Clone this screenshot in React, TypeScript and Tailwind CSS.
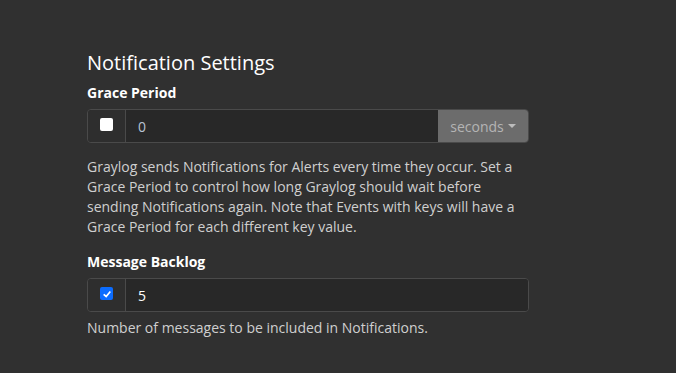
export default function App() {
    return (
        <div className="min-h-[373px] w-full bg-[#303030] font-['Open_Sans',sans-serif] text-[#e0e0e0]">
            <div className="w-[442px] ml-[87px] pt-[49px]">
                <h2 className="text-[20px] leading-[28px] text-white mb-[6px]">Notification Settings</h2>

                <label className="block text-[14px] font-bold leading-[20px] text-white mb-[6px]">Grace Period</label>
                <div className="flex h-[34px] rounded-[4px] border border-[#4a4a4a] overflow-hidden">
                    <span className="w-[38px] flex items-center justify-center border-r border-[#4a4a4a] bg-[#2e2e2e]">
                        <span className="w-[13px] h-[13px] rounded-[2px] bg-white -mt-[3px]"/>
                    </span>
                    <span className="flex-1 flex items-center bg-[#282828] px-[12px] text-[14px] text-[#b8c4d4]">0</span>
                    <span className="w-[90px] flex items-center justify-center gap-[4px] bg-[#6c6c6c] text-[14px] text-[#b4b4b4]">
                        seconds
                        <span className="w-0 h-0 border-l-[4px] border-r-[4px] border-t-[4px] border-l-transparent border-r-transparent border-t-[#bcbcbc]"/>
                    </span>
                </div>
                <p className="mt-[14px] text-[14px] leading-[20px] text-[#cfcfcf]">
                    Graylog sends Notifications for Alerts every time they occur. Set a Grace Period to control how long Graylog should wait before sending Notifications again. Note that Events with keys will have a Grace Period for each different key value.
                </p>

                <label className="block mt-[15px] text-[14px] font-bold leading-[20px] text-white mb-[6px]">Message Backlog</label>
                <div className="flex h-[34px] rounded-[4px] border border-[#4a4a4a] overflow-hidden">
                    <span className="w-[38px] flex items-center justify-center border-r border-[#4a4a4a] bg-[#2e2e2e]">
                        <span className="w-[13px] h-[13px] rounded-[2px] bg-[#0b6cff] -mt-[3px] flex items-center justify-center">
                            <svg viewBox="0 0 12 12" className="w-[10px] h-[10px]">
                                <path d="M2 6.5 L5 9 L10 3" fill="none" stroke="white" strokeWidth="2"/>
                            </svg>
                        </span>
                    </span>
                    <span className="flex-1 flex items-center bg-[#282828] px-[12px] text-[14px] text-white">5</span>
                </div>
                <p className="mt-[6px] text-[14px] leading-[20px] text-[#cfcfcf]">
                    Number of messages to be included in Notifications.
                </p>
            </div>
        </div>
    )
}
